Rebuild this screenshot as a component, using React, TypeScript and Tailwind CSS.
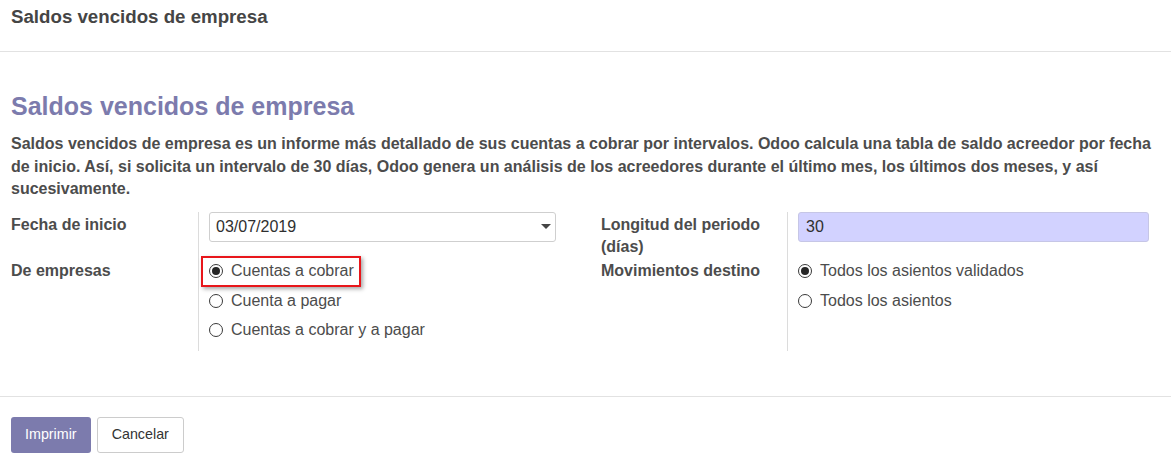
const font = { fontFamily: '"Liberation Sans", Arial, sans-serif' };

function Radio({ label, checked = false, marked = false }: { label: string; checked?: boolean; marked?: boolean }) {
    return (
        <div className="relative flex items-center h-[29.5px]">
            {marked && (
                <div className="absolute -left-[8px] top-[-1px] w-[160px] h-[31px] border-2 border-[#e8161b] shadow-[2px_2px_4px_rgba(0,0,0,0.35)]" />
            )}
            <span className="w-[14px] h-[14px] rounded-full border border-[#3a3a3a] bg-white flex items-center justify-center shrink-0">
                {checked && <span className="w-[8px] h-[8px] rounded-full bg-[#262626]" />}
            </span>
            <span className="ml-[8px] text-[16px] text-[#4c4c4c]">{label}</span>
        </div>
    );
}

export default function App() {
    return (
        <div className="w-[1171px] h-[460px] bg-white text-[#4c4c4c] overflow-hidden" style={font}>
            <div className="h-[52px] border-b border-[#e2e2e2] px-[11px] pt-[6px]">
                <h4 className="text-[18.7px] leading-[22px] font-bold text-[#454545]">Saldos vencidos de empresa</h4>
            </div>

            <div className="px-[11px]">
                <h2 className="mt-[39px] text-[25px] leading-[30px] font-bold text-[#7c7bad]">Saldos vencidos de empresa</h2>
                <p className="mt-[12px] text-[16px] leading-[22.5px] font-bold text-[#4c4c4c] pr-[2px]">
                    Saldos vencidos de empresa es un informe más detallado de sus cuentas a cobrar por intervalos. Odoo calcula una tabla de saldo acreedor por fecha de inicio. Así, si solicita un intervalo de 30 días, Odoo genera un análisis de los acreedores durante el último mes, los últimos dos meses, y así sucesivamente.
                </p>

                <div className="mt-[11px] grid grid-cols-[187px_403px_186px_1fr] text-[16px]">
                    <div className="font-bold leading-[22px] pt-[2px]">Fecha de inicio</div>
                    <div className="border-l border-[#dcdcdc] pl-[10px]">
                        <div className="w-[347px] h-[30px] border border-[#cfcfcf] rounded-[3px] flex items-center justify-between pl-[6px] pr-[4px] text-[#2f2f2f]">
                            <span>03/07/2019</span>
                            <svg width="10" height="5" viewBox="0 0 10 5"><path d="M0 0h10L5 5z" fill="#454545" /></svg>
                        </div>
                    </div>
                    <div className="font-bold leading-[22px] pt-[2px]">Longitud del periodo<br />(días)</div>
                    <div className="border-l border-[#dcdcdc] pl-[10px]">
                        <div className="w-[351px] h-[30px] bg-[#d2d2ff] border border-[#c6c6e6] rounded-[3px] flex items-center pl-[7px] text-[#2f2f2f]">30</div>
                    </div>

                    <div className="font-bold leading-[22px] pt-[2px]">De empresas</div>
                    <div className="border-l border-[#dcdcdc] pl-[10px] pb-[6px]">
                        <div className="-mt-[1px]">
                            <Radio label="Cuentas a cobrar" checked marked />
                            <Radio label="Cuenta a pagar" />
                            <Radio label="Cuentas a cobrar y a pagar" />
                        </div>
                    </div>
                    <div className="font-bold leading-[22px] pt-[2px]">Movimientos destino</div>
                    <div className="border-l border-[#dcdcdc] pl-[10px]">
                        <div className="-mt-[1px]">
                            <Radio label="Todos los asientos validados" checked />
                            <Radio label="Todos los asientos" />
                        </div>
                    </div>
                </div>
            </div>

            <div className="mt-[45px] border-t border-[#e2e2e2] px-[11px] pt-[20px] flex gap-[6px]">
                <button className="h-[36px] px-[14px] rounded-[3px] bg-[#7c7bad] text-white text-[14.3px]">Imprimir</button>
                <button className="h-[36px] px-[14px] rounded-[3px] border border-[#cccccc] bg-white text-[#333] text-[14.3px]">Cancelar</button>
            </div>
        </div>
    );
}
